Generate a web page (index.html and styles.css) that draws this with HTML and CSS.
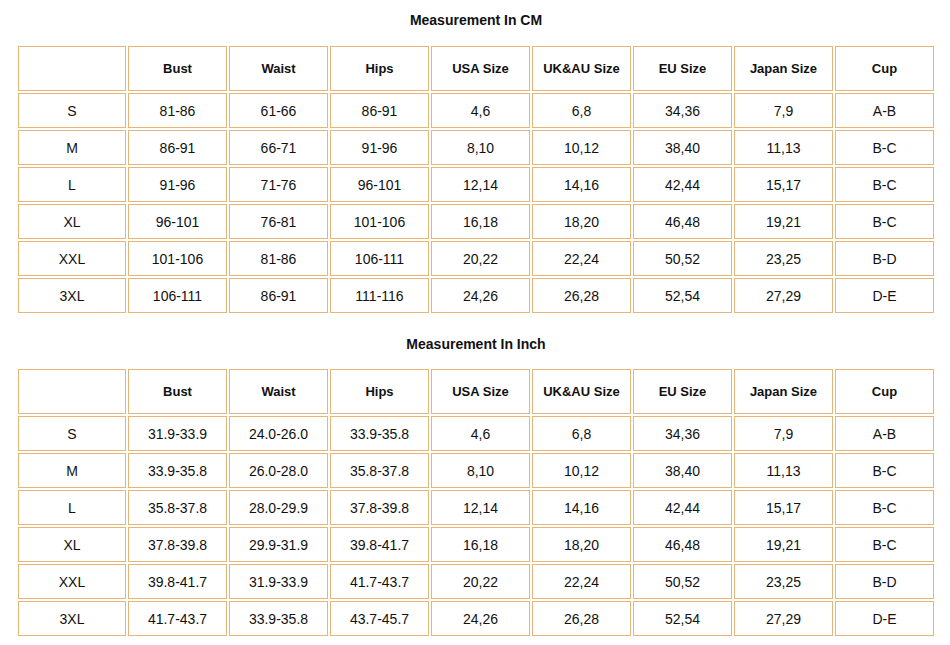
FILE: index.html
```html
<!DOCTYPE html>
<html>
<head>
<meta charset="utf-8">
<link rel="stylesheet" href="styles.css">
</head>
<body>
<div class="page">
  <div class="title title-first">Measurement In CM</div>
  <table class="size-table">
    <tr class="head"><th class="c0"></th><th>Bust</th><th>Waist</th><th>Hips</th><th>USA Size</th><th>UK&amp;AU Size</th><th>EU Size</th><th>Japan Size</th><th>Cup</th></tr>
    <tr><td>S</td><td>81-86</td><td>61-66</td><td>86-91</td><td>4,6</td><td>6,8</td><td>34,36</td><td>7,9</td><td>A-B</td></tr>
    <tr><td>M</td><td>86-91</td><td>66-71</td><td>91-96</td><td>8,10</td><td>10,12</td><td>38,40</td><td>11,13</td><td>B-C</td></tr>
    <tr><td>L</td><td>91-96</td><td>71-76</td><td>96-101</td><td>12,14</td><td>14,16</td><td>42,44</td><td>15,17</td><td>B-C</td></tr>
    <tr><td>XL</td><td>96-101</td><td>76-81</td><td>101-106</td><td>16,18</td><td>18,20</td><td>46,48</td><td>19,21</td><td>B-C</td></tr>
    <tr><td>XXL</td><td>101-106</td><td>81-86</td><td>106-111</td><td>20,22</td><td>22,24</td><td>50,52</td><td>23,25</td><td>B-D</td></tr>
    <tr><td>3XL</td><td>106-111</td><td>86-91</td><td>111-116</td><td>24,26</td><td>26,28</td><td>52,54</td><td>27,29</td><td>D-E</td></tr>
  </table>
  <div class="title title-second">Measurement In Inch</div>
  <table class="size-table">
    <tr class="head"><th class="c0"></th><th>Bust</th><th>Waist</th><th>Hips</th><th>USA Size</th><th>UK&amp;AU Size</th><th>EU Size</th><th>Japan Size</th><th>Cup</th></tr>
    <tr><td>S</td><td>31.9-33.9</td><td>24.0-26.0</td><td>33.9-35.8</td><td>4,6</td><td>6,8</td><td>34,36</td><td>7,9</td><td>A-B</td></tr>
    <tr><td>M</td><td>33.9-35.8</td><td>26.0-28.0</td><td>35.8-37.8</td><td>8,10</td><td>10,12</td><td>38,40</td><td>11,13</td><td>B-C</td></tr>
    <tr><td>L</td><td>35.8-37.8</td><td>28.0-29.9</td><td>37.8-39.8</td><td>12,14</td><td>14,16</td><td>42,44</td><td>15,17</td><td>B-C</td></tr>
    <tr><td>XL</td><td>37.8-39.8</td><td>29.9-31.9</td><td>39.8-41.7</td><td>16,18</td><td>18,20</td><td>46,48</td><td>19,21</td><td>B-C</td></tr>
    <tr><td>XXL</td><td>39.8-41.7</td><td>31.9-33.9</td><td>41.7-43.7</td><td>20,22</td><td>22,24</td><td>50,52</td><td>23,25</td><td>B-D</td></tr>
    <tr><td>3XL</td><td>41.7-43.7</td><td>33.9-35.8</td><td>43.7-45.7</td><td>24,26</td><td>26,28</td><td>52,54</td><td>27,29</td><td>D-E</td></tr>
  </table>
</div>
</body>
</html>
```
FILE: styles.css
```css
html, body {
  margin: 0;
  padding: 0;
  background: #ffffff;
}
.page {
  padding-left: 16px;
  width: 920px;
  font-family: "Liberation Sans", Arial, sans-serif;
  color: #111111;
}
.title {
  font-weight: bold;
  font-size: 14px;
  line-height: 16px;
  height: 16px;
  text-align: center;
  color: #111111;
}
.title-first {
  margin-top: 12px;
  margin-bottom: 16px;
}
.title-second {
  margin-top: 21px;
  margin-bottom: 15px;
}
.size-table {
  border-collapse: separate;
  border-spacing: 2px;
  table-layout: fixed;
  width: 920px;
}
.size-table th,
.size-table td {
  border: 1px solid #e6b677;
  padding: 0;
  text-align: center;
  vertical-align: middle;
  width: 99px;
  box-sizing: border-box;
}
.size-table th.c0 {
  width: 108px;
}
.size-table th {
  font-weight: bold;
  font-size: 13px;
  height: 45px;
}
.size-table td {
  font-size: 14px;
  height: 35px;
}
```
